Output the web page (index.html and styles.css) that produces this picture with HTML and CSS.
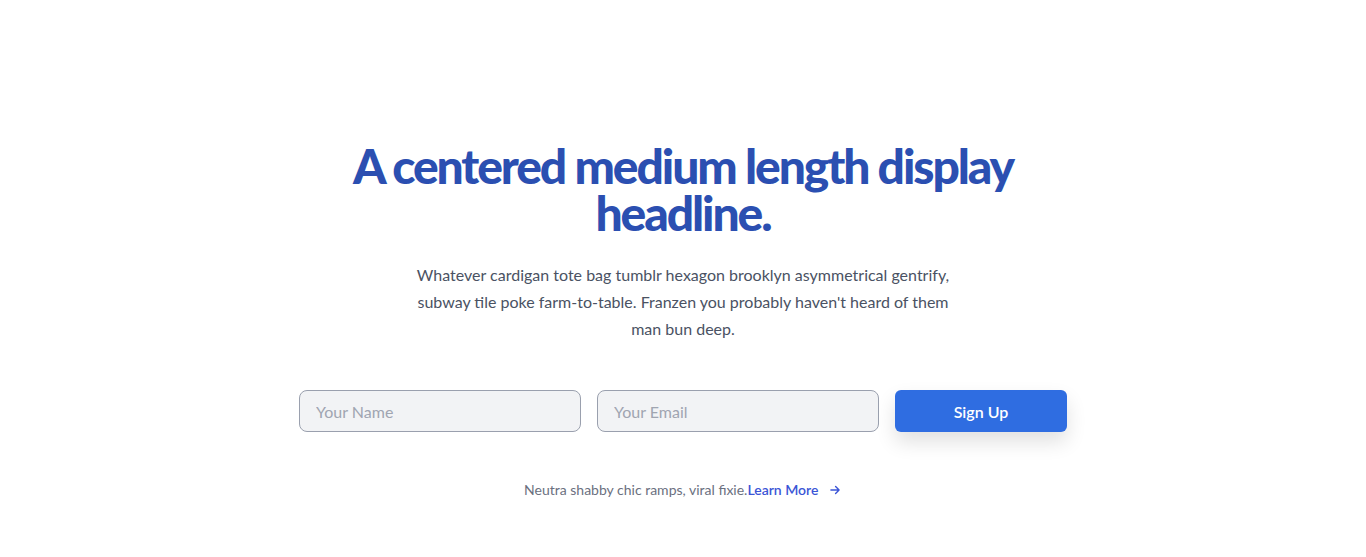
FILE: index.html
```html
<!DOCTYPE html>
<html>
<head>
<meta charset="utf-8">
<link rel="stylesheet" href="styles.css">
</head>
<body>
<section class="hero">
  <h1 class="title">A centered medium length display headline.</h1>
  <p class="lead">Whatever cardigan tote bag tumblr hexagon brooklyn asymmetrical gentrify, subway tile poke farm-to-table. Franzen you probably haven't heard of them man bun deep.</p>
  <form class="signup">
    <input class="field" type="text" placeholder="Your Name">
    <input class="field" type="email" placeholder="Your Email">
    <button class="btn" type="button">Sign Up</button>
  </form>
  <p class="note">Neutra shabby chic ramps, viral fixie.<a class="more" href="#">Learn More <svg class="arrow" width="14" height="14" viewBox="0 0 24 24" fill="none" stroke="currentColor" stroke-width="2.4" stroke-linecap="round" stroke-linejoin="round"><path d="M5 12h14M13 6l6 6-6 6"/></svg></a></p>
</section>
</body>
</html>
```
FILE: styles.css
```css
* { box-sizing: border-box; }
html, body { margin: 0; background: #fff; }
body { font-family: "Lato", "Inter", sans-serif; color: #4a5160; }
.hero {
  display: flex;
  flex-direction: column;
  align-items: center;
  padding-top: 142px;
}
.title {
  margin: 0;
  width: 720px;
  text-align: center;
  font-family: "Lato", sans-serif;
  font-weight: 900;
  font-size: 48px;
  line-height: 47px;
  letter-spacing: -2.1px;
  color: #2b4fb1;
}
.lead {
  margin: 25px 0 0;
  width: 560px;
  text-align: center;
  font-size: 16px;
  line-height: 27px;
  color: #4a5263;
}
.signup {
  display: flex;
  gap: 16px;
  margin-top: 48px;
  width: 768px;
}
.field {
  width: 282px;
  height: 42px;
  padding: 0 16px;
  border: 1px solid #9aa0ae;
  border-radius: 8px;
  background: #f2f3f5;
  font-family: inherit;
  font-size: 16px;
  color: #333;
}
.field::placeholder { color: #a0a5b1; }
.btn {
  width: 172px;
  height: 42px;
  border: 0;
  border-radius: 6px;
  background: #2f6de1;
  color: #fff;
  font-family: inherit;
  font-size: 16px;
  font-weight: 600;
  box-shadow: 0 10px 20px rgba(0,0,0,0.12);
}
.note {
  margin: 48px 0 0;
  font-size: 14px;
  line-height: 20px;
  color: #6b7080;
}
.more {
  color: #3b55d6;
  text-decoration: none;
  font-weight: 600;
}
.arrow { vertical-align: -2px; margin-left: 6px; }
```
